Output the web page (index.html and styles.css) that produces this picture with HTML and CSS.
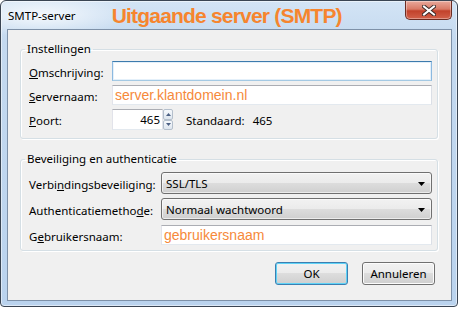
FILE: index.html
```html
<!DOCTYPE html>
<html lang="nl">

<head>
    <meta charset="UTF-8">
    <title>SMTP-server</title>
    <link rel="stylesheet" href="styles.css">
</head>

<body>
    <div class="window">
        <div class="titlebar">
            <span class="title">SMTP-server</span>
            <span class="heading">Uitgaande server (SMTP)</span>
            <button class="close" type="button" aria-label="Sluiten">
                <svg width="14" height="11" viewBox="0 0 14 11">
                    <path d="M2 1.5 L12 9.5 M12 1.5 L2 9.5" stroke="#3b2a28" stroke-width="4" stroke-linecap="square" />
                    <path d="M2 1.5 L12 9.5 M12 1.5 L2 9.5" stroke="#fff" stroke-width="2" stroke-linecap="square" />
                </svg>
            </button>
        </div>

        <div class="client">
            <fieldset class="group">
                <legend>Instellingen</legend>
                <div class="row">
                    <label class="label" for="desc"><u>O</u>mschrijving:</label>
                    <input class="field focused" type="text" id="desc">
                </div>
                <div class="row">
                    <label class="label" for="host"><u>S</u>ervernaam:</label>
                    <input class="field" type="text" id="host" value="server.klantdomein.nl">
                </div>
                <div class="row row-port">
                    <label class="label" for="port"><u>P</u>oort:</label>
                    <div class="spin">
                        <input class="spin-input" type="text" id="port" value="465">
                        <div class="spin-buttons">
                            <span class="spin-btn">
                                <svg width="5" height="3" viewBox="0 0 5 3"><path d="M0 3 L2.5 0 L5 3 Z" fill="#4b5f83" /></svg>
                            </span>
                            <span class="spin-btn">
                                <svg width="5" height="3" viewBox="0 0 5 3"><path d="M0 0 L5 0 L2.5 3 Z" fill="#4b5f83" /></svg>
                            </span>
                        </div>
                    </div>
                    <span class="default-label">Standaard:</span>
                    <span class="default-value">465</span>
                </div>
            </fieldset>

            <fieldset class="group security">
                <legend>Beveiliging en authenticatie</legend>
                <div class="row">
                    <label class="label">Verbi<u>n</u>dingsbeveiliging:</label>
                    <div class="select">
                        <span>SSL/TLS</span>
                        <svg class="arrow" width="7" height="4" viewBox="0 0 7 4"><path d="M0 0 L7 0 L3.5 4 Z" fill="#000" /></svg>
                    </div>
                </div>
                <div class="row">
                    <label class="label">Authenticatiemetho<u>d</u>e:</label>
                    <div class="select">
                        <span>Normaal wachtwoord</span>
                        <svg class="arrow" width="7" height="4" viewBox="0 0 7 4"><path d="M0 0 L7 0 L3.5 4 Z" fill="#000" /></svg>
                    </div>
                </div>
                <div class="row">
                    <label class="label" for="user">G<u>e</u>bruikersnaam:</label>
                    <input class="field" type="text" id="user" value="gebruikersnaam">
                </div>
            </fieldset>

            <div class="actions">
                <button class="btn btn-default" type="button">OK</button>
                <button class="btn" type="button">Annuleren</button>
            </div>
        </div>
    </div>
</body>

</html>
```

FILE: styles.css
```css
/* Windows 7 style dialog */
body {
    margin: 0;
    padding: 0;
    background-color: #fff;
    font-family: "Noto Sans", sans-serif;
    font-size: 11.5px;
    color: #000;
}

.window {
    box-sizing: border-box;
    width: 458px;
    height: 307px;
    padding: 0 5px 5px 6px;
    display: flex;
    flex-direction: column;
    border: 1px solid #3a4553;
    border-radius: 6px 6px 4px 4px;
    background: radial-gradient(ellipse 90px 22px at 40px 14px, rgba(255, 255, 255, 0.8), rgba(255, 255, 255, 0)),
        linear-gradient(to bottom, #d3e4f5 0, #c4d9ef 40px, #bad3ee 100%);
    box-shadow: inset 0 0 0 1px rgba(255, 255, 255, 0.5);
}

.titlebar {
    height: 28px;
    flex: none;
    display: flex;
    align-items: center;
}

.title {
    margin-left: 1px;
    margin-top: 1px;
}

.heading {
    margin-left: 36px;
    margin-top: 1px;
    font-family: "Liberation Sans", Arial, sans-serif;
    font-weight: bold;
    font-size: 21px;
    letter-spacing: -0.8px;
    color: #f6852e;
}

.close {
    align-self: flex-start;
    margin-left: auto;
    width: 47px;
    height: 19px;
    padding: 0;
    display: flex;
    align-items: center;
    justify-content: center;
    border: 1px solid #6b2c22;
    border-top: none;
    border-radius: 0 0 5px 5px;
    background: linear-gradient(to bottom, #e9a99b 0, #d97a66 45%, #c2422b 55%, #d2614a 100%);
    box-shadow: inset 0 0 0 1px rgba(255, 255, 255, 0.35);
}

.client {
    flex: 1;
    box-sizing: border-box;
    padding: 11px 13px 0 12px;
    border: 1px solid #7e91a8;
    background-color: #f0f0f0;
}

.group {
    margin: 0;
    padding: 4px 5px 8px 8px;
    border: 1px solid #d5dfe5;
    border-radius: 3px;
    box-shadow: inset 1px 1px 0 #fff, 1px 1px 0 #fff;
}

.group legend {
    margin-left: -4px;
    padding: 0 2px;
    line-height: 16px;
}

.group.security {
    margin-top: 12px;
    padding-top: 5px;
    padding-bottom: 5px;
}

.row {
    display: flex;
    align-items: center;
    height: 20px;
}

.row + .row {
    margin-top: 4px;
}

.row-port {
    height: 21px;
}

.security .row {
    height: 22px;
}

.security .row + .row {
    margin-top: 4px;
}

.security .row:last-child {
    height: 20px;
    margin-top: 5px;
}

.label {
    flex: none;
    width: 83px;
    margin-top: 2px;
}

.security .label {
    width: 132px;
}

u {
    text-underline-offset: 1px;
}

.field {
    flex: 1;
    box-sizing: border-box;
    height: 20px;
    min-width: 0;
    margin: 0;
    padding: 0 2px;
    border: 1px solid;
    border-color: #abadb3 #dbdfe6 #e3e9ef #e2e3ea;
    background-color: #fff;
    font-family: "Liberation Sans", Arial, sans-serif;
    font-size: 14px;
    color: #f6893a;
    outline: none;
}

.field.focused {
    border-color: #3d7bad #8cb9e0 #a4c9e3 #8cb9e0;
    box-shadow: inset 0 0 0 1px #e4f0fa;
}

.spin {
    display: flex;
    height: 21px;
}

.spin-input {
    box-sizing: border-box;
    width: 51px;
    height: 21px;
    margin: 0;
    padding: 0 2px 0 0;
    border: 1px solid;
    border-color: #abadb3 #e2e3ea #e3e9ef #e2e3ea;
    background-color: #fff;
    font-family: "Noto Sans", sans-serif;
    font-size: 11.5px;
    text-align: right;
    color: #000;
    outline: none;
}

.spin-buttons {
    display: flex;
    flex-direction: column;
    width: 10px;
}

.spin-btn {
    flex: 1;
    box-sizing: border-box;
    display: flex;
    align-items: center;
    justify-content: center;
    border: 1px solid #b4bfcc;
    border-radius: 2px;
    background: linear-gradient(to bottom, #f6f9fc, #dde5ee);
}

.default-label {
    margin-left: 13px;
    margin-top: 2px;
}

.default-value {
    margin-left: 8px;
    margin-top: 2px;
}

.select {
    flex: 1;
    box-sizing: border-box;
    height: 22px;
    display: flex;
    align-items: center;
    padding: 1px 6px 0 4px;
    border: 1px solid #707070;
    border-radius: 3px;
    background: linear-gradient(to bottom, #f2f2f2 0, #ebebeb 50%, #dddddd 50%, #cfcfcf 100%);
    box-shadow: inset 0 0 0 1px rgba(255, 255, 255, 0.6);
}

.select .arrow {
    margin-left: auto;
}

.actions {
    display: flex;
    justify-content: flex-end;
    gap: 14px;
    margin-top: 11px;
    padding-right: 3px;
}

.btn {
    box-sizing: border-box;
    width: 73px;
    height: 23px;
    padding: 0;
    border: 1px solid #707070;
    border-radius: 3px;
    background: linear-gradient(to bottom, #f2f2f2 0, #ebebeb 50%, #dddddd 50%, #cfcfcf 100%);
    box-shadow: inset 0 0 0 1px #fcfcfc;
    font-family: "Noto Sans", sans-serif;
    font-size: 11.5px;
    color: #000;
}

.btn-default {
    border-color: #3c7fb1;
    box-shadow: inset 0 0 0 1px #5fd3f7;
}
```
